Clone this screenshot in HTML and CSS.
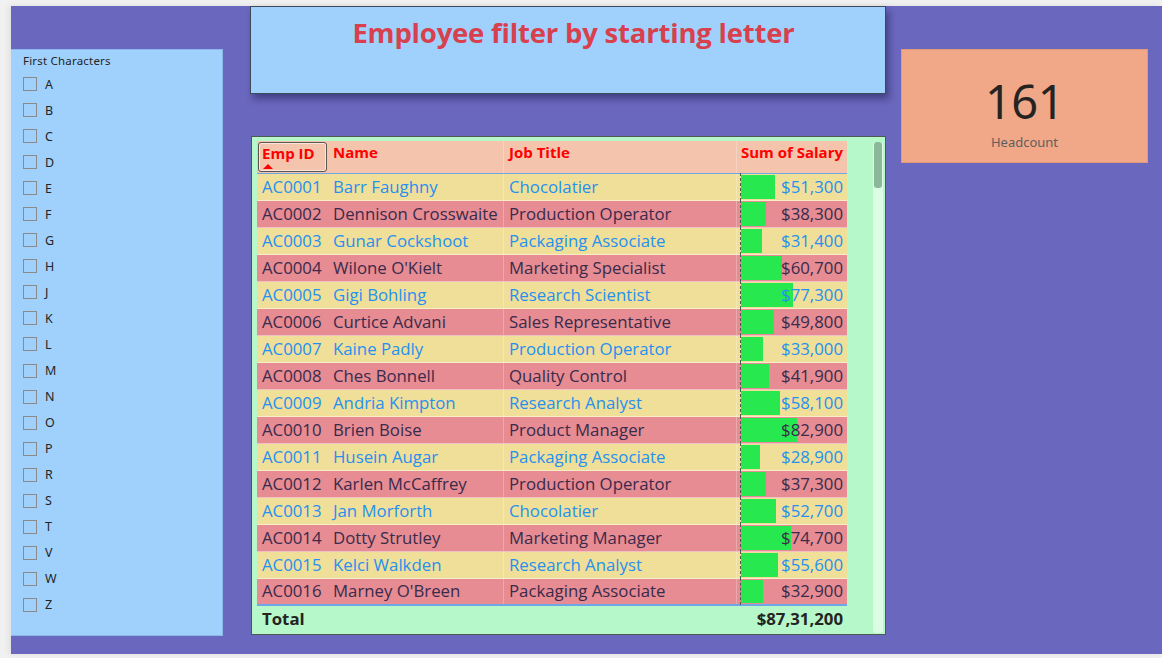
FILE: index.html
```html
<!DOCTYPE html>
<html>
<head>
<meta charset="utf-8">
<link rel="stylesheet" href="styles.css">
</head>
<body>
<div class="canvas">
  <div class="slicer">
    <div class="slicer-title">First Characters</div>
    <ul class="slicer-list">
      <li><span class="box"></span>A</li>
      <li><span class="box"></span>B</li>
      <li><span class="box"></span>C</li>
      <li><span class="box"></span>D</li>
      <li><span class="box"></span>E</li>
      <li><span class="box"></span>F</li>
      <li><span class="box"></span>G</li>
      <li><span class="box"></span>H</li>
      <li><span class="box"></span>J</li>
      <li><span class="box"></span>K</li>
      <li><span class="box"></span>L</li>
      <li><span class="box"></span>M</li>
      <li><span class="box"></span>N</li>
      <li><span class="box"></span>O</li>
      <li><span class="box"></span>P</li>
      <li><span class="box"></span>R</li>
      <li><span class="box"></span>S</li>
      <li><span class="box"></span>T</li>
      <li><span class="box"></span>V</li>
      <li><span class="box"></span>W</li>
      <li><span class="box"></span>Z</li>
    </ul>
  </div>

  <div class="middle">
    <div class="title-box">
      <h1 class="title">Employee filter by starting letter</h1>
    </div>
    <div class="table-visual">
      <div class="table-wrap">
        <div class="trow thead">
          <div class="c c-id"><span class="sorted">Emp ID<span class="arrow"></span></span></div>
          <div class="c c-name">Name</div>
          <div class="c c-job">Job Title</div>
          <div class="c c-sal">Sum of Salary</div>
        </div>
        <div class="tbody">
          <div class="trow odd"><div class="c c-id">AC0001</div><div class="c c-name">Barr Faughny</div><div class="c c-job">Chocolatier</div><div class="c c-sal"><span class="bar" style="width:34px"></span><span class="val">$51,300</span></div></div>
          <div class="trow even"><div class="c c-id">AC0002</div><div class="c c-name">Dennison Crosswaite</div><div class="c c-job">Production Operator</div><div class="c c-sal"><span class="bar" style="width:25px"></span><span class="val">$38,300</span></div></div>
          <div class="trow odd"><div class="c c-id">AC0003</div><div class="c c-name">Gunar Cockshoot</div><div class="c c-job">Packaging Associate</div><div class="c c-sal"><span class="bar" style="width:21px"></span><span class="val">$31,400</span></div></div>
          <div class="trow even"><div class="c c-id">AC0004</div><div class="c c-name">Wilone O'Kielt</div><div class="c c-job">Marketing Specialist</div><div class="c c-sal"><span class="bar" style="width:41px"></span><span class="val">$60,700</span></div></div>
          <div class="trow odd"><div class="c c-id">AC0005</div><div class="c c-name">Gigi Bohling</div><div class="c c-job">Research Scientist</div><div class="c c-sal"><span class="bar" style="width:52px"></span><span class="val">$77,300</span></div></div>
          <div class="trow even"><div class="c c-id">AC0006</div><div class="c c-name">Curtice Advani</div><div class="c c-job">Sales Representative</div><div class="c c-sal"><span class="bar" style="width:33px"></span><span class="val">$49,800</span></div></div>
          <div class="trow odd"><div class="c c-id">AC0007</div><div class="c c-name">Kaine Padly</div><div class="c c-job">Production Operator</div><div class="c c-sal"><span class="bar" style="width:22px"></span><span class="val">$33,000</span></div></div>
          <div class="trow even"><div class="c c-id">AC0008</div><div class="c c-name">Ches Bonnell</div><div class="c c-job">Quality Control</div><div class="c c-sal"><span class="bar" style="width:28px"></span><span class="val">$41,900</span></div></div>
          <div class="trow odd"><div class="c c-id">AC0009</div><div class="c c-name">Andria Kimpton</div><div class="c c-job">Research Analyst</div><div class="c c-sal"><span class="bar" style="width:39px"></span><span class="val">$58,100</span></div></div>
          <div class="trow even"><div class="c c-id">AC0010</div><div class="c c-name">Brien Boise</div><div class="c c-job">Product Manager</div><div class="c c-sal"><span class="bar" style="width:56px"></span><span class="val">$82,900</span></div></div>
          <div class="trow odd"><div class="c c-id">AC0011</div><div class="c c-name">Husein Augar</div><div class="c c-job">Packaging Associate</div><div class="c c-sal"><span class="bar" style="width:19px"></span><span class="val">$28,900</span></div></div>
          <div class="trow even"><div class="c c-id">AC0012</div><div class="c c-name">Karlen McCaffrey</div><div class="c c-job">Production Operator</div><div class="c c-sal"><span class="bar" style="width:25px"></span><span class="val">$37,300</span></div></div>
          <div class="trow odd"><div class="c c-id">AC0013</div><div class="c c-name">Jan Morforth</div><div class="c c-job">Chocolatier</div><div class="c c-sal"><span class="bar" style="width:35px"></span><span class="val">$52,700</span></div></div>
          <div class="trow even"><div class="c c-id">AC0014</div><div class="c c-name">Dotty Strutley</div><div class="c c-job">Marketing Manager</div><div class="c c-sal"><span class="bar" style="width:50px"></span><span class="val">$74,700</span></div></div>
          <div class="trow odd"><div class="c c-id">AC0015</div><div class="c c-name">Kelci Walkden</div><div class="c c-job">Research Analyst</div><div class="c c-sal"><span class="bar" style="width:37px"></span><span class="val">$55,600</span></div></div>
          <div class="trow even"><div class="c c-id">AC0016</div><div class="c c-name">Marney O'Breen</div><div class="c c-job">Packaging Associate</div><div class="c c-sal"><span class="bar" style="width:22px"></span><span class="val">$32,900</span></div></div>
        </div>
        <div class="trow total">
          <div class="c c-id">Total</div>
          <div class="c c-name"></div>
          <div class="c c-job"></div>
          <div class="c c-sal"><span class="val">$87,31,200</span></div>
        </div>
      </div>
      <div class="scrollbar"><div class="thumb"></div></div>
    </div>
  </div>

  <div class="card">
    <div class="card-value">161</div>
    <div class="card-label">Headcount</div>
  </div>
</div>
</body>
</html>
```

FILE: styles.css
```css
* { box-sizing: border-box; }

html, body {
  margin: 0;
  padding: 0;
}

body {
  background: #f1f1f1;
  width: 1162px;
  height: 658px;
  overflow: hidden;
  font-family: "Open Sans", "Noto Sans", sans-serif;
}

.canvas {
  margin: 6px 0 0 11px;
  width: 1151px;
  height: 648px;
  background: #6a67be;
  display: flex;
  align-items: flex-start;
  box-shadow: -2px 0 6px rgba(0,0,0,0.08);
}

/* Slicer */
.slicer {
  margin-top: 43px;
  width: 212px;
  height: 587px;
  background: #a0d1fc;
  border-top: 1px solid #8bb6ea;
  border-right: 1px solid #8bb6ea;
  border-bottom: 1px solid #8bb6ea;
  padding: 4px 0 0 12px;
  font-family: "Noto Sans", "DejaVu Sans", sans-serif;
  color: #252423;
}

.slicer-title {
  font-size: 11.5px;
  line-height: 14px;
  letter-spacing: 0.2px;
}

.slicer-list {
  list-style: none;
  margin: 3px 0 0 0;
  padding: 0;
}

.slicer-list li {
  display: flex;
  align-items: center;
  height: 26.05px;
  font-size: 12.5px;
  color: #252423;
}

.box {
  width: 14px;
  height: 14px;
  border: 1px solid #8a8a8a;
  margin-right: 8px;
  flex: none;
}

/* Middle column */
.middle {
  margin-left: 27px;
  width: 637px;
  display: flex;
  flex-direction: column;
}

.title-box {
  width: 636px;
  height: 88px;
  background: #a0d1fc;
  border: 1px solid #3d4a5c;
  box-shadow: 3px 5px 7px rgba(20,20,60,0.45);
  padding-left: 11px;
}

.title {
  margin: 9px 0 0 0;
  text-align: center;
  font-family: "Open Sans", sans-serif;
  font-weight: 700;
  font-size: 27.5px;
  line-height: 34px;
  color: #d9404e;
  letter-spacing: -0.2px;
}

.table-visual {
  margin-top: 42px;
  margin-left: 1px;
  width: 635px;
  height: 499px;
  background: #b6f8c9;
  border: 1px solid #4d5a52;
  display: flex;
  padding: 4px 0 0 5px;
}

.table-wrap {
  width: 590px;
  font-family: "Open Sans", sans-serif;
}

.trow {
  display: flex;
  height: 27px;
  align-items: stretch;
}

.c {
  display: flex;
  align-items: center;
  white-space: nowrap;
  padding-left: 5px;
  font-size: 16.8px;
}

.tbody .c { padding-bottom: 2px; }

.c-id { width: 72px; }
.c-name { width: 174px; padding-left: 4px; }
.c-job { width: 233px; border-left: 1px solid rgba(255,255,255,0.25); }
.c-sal {
  width: 111px;
  border-left: 1px solid rgba(255,255,255,0.25);
  justify-content: flex-end;
  padding-right: 4px;
  position: relative;
}

.thead {
  height: 33px;
  background: #f4c4ad;
  border-bottom: 1px solid #6ea7e6;
}

.thead .c {
  color: #fe0000;
  font-weight: 700;
  font-size: 15px;
  align-items: flex-start;
  padding-top: 1px;
}

.thead .c-id { padding-left: 1px; padding-top: 1px; }

.sorted {
  position: relative;
  display: block;
  width: 69px;
  height: 30px;
  border: 1px solid #5a5550;
  border-radius: 3px;
  padding: 0 0 0 3px;
  box-shadow: inset 0 0 0 1px rgba(255,255,255,0.6);
}

.arrow {
  position: absolute;
  left: 4px;
  bottom: 2px;
  width: 0;
  height: 0;
  border-left: 5px solid transparent;
  border-right: 5px solid transparent;
  border-bottom: 5px solid #fe0000;
}

.tbody .trow {
  border-bottom: 1px solid rgba(255,255,255,0.45);
}

.tbody .trow:last-child {
  border-bottom: 2px solid #6ea7e6;
}

.odd { background: #f0df98; color: #2590f0; }
.even { background: #e68c92; color: #3a2a4c; }

.tbody .c-sal::before {
  content: "";
  position: absolute;
  left: 3px;
  top: -1px;
  bottom: -1px;
  border-left: 1px dashed #4d5a52;
}

.bar {
  position: absolute;
  left: 4px;
  top: 1px;
  bottom: 1px;
  background: #27e94f;
}

.val { position: relative; }

.total {
  height: 27px;
  color: #252423;
}

.total .c {
  font-weight: 700;
  font-size: 16.8px;
  padding-bottom: 3px;
}

.total .c-job, .total .c-sal { border-left-color: transparent; }

.scrollbar {
  margin-left: 26px;
  margin-top: 1px;
  width: 10px;
  height: 491px;
  background: #dcfde3;
  border-radius: 3px;
  padding: 0 1px;
}

.thumb {
  width: 8px;
  height: 46px;
  background: #8cb89a;
  border-radius: 3px;
}

/* Card */
.card {
  margin-left: 14px;
  margin-top: 43px;
  width: 247px;
  height: 114px;
  background: #f0a888;
  border: 1px solid #e3987a;
  display: flex;
  flex-direction: column;
  align-items: center;
  font-family: "Noto Sans", "DejaVu Sans", sans-serif;
}

.card-value {
  margin-top: 24px;
  font-size: 47px;
  line-height: 54px;
  color: #252423;
  letter-spacing: -0.5px;
}

.card-label {
  margin-top: 6px;
  font-size: 13px;
  line-height: 16px;
  color: #605e5c;
}
```
